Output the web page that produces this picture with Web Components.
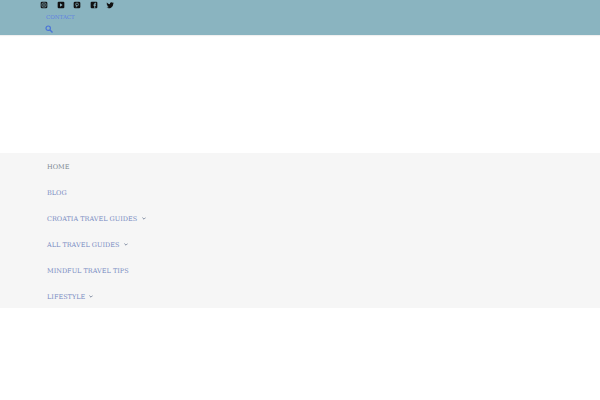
<!DOCTYPE html>
<html>
<head>
<meta charset="utf-8">
<title>Menu</title>
<style>
  html, body { margin: 0; background: #fff; }
  body { font-family: "DejaVu Serif", serif; }
</style>
</head>
<body>
<top-bar>
  <social-icon name="instagram"></social-icon>
  <social-icon name="youtube"></social-icon>
  <social-icon name="pinterest"></social-icon>
  <social-icon name="facebook"></social-icon>
  <social-icon name="twitter"></social-icon>
  <span slot="link">CONTACT</span>
</top-bar>
<mobile-menu>
  <menu-row style="--c:#7d8993">HOME</menu-row>
  <menu-row>BLOG</menu-row>
  <menu-row caret>CROATIA TRAVEL GUIDES</menu-row>
  <menu-row caret>ALL TRAVEL GUIDES</menu-row>
  <menu-row>MINDFUL TRAVEL TIPS</menu-row>
  <menu-row caret style="--gap:3px">LIFESTYLE</menu-row>
</mobile-menu>
<script>
const icons = {
  instagram: '<rect x="1" y="1" width="10" height="10" rx="2" fill="#111"/><rect x="3" y="3" width="6" height="6" rx="1.5" fill="none" stroke="#8ab4c0"/><circle cx="6" cy="6" r="1.2" fill="#8ab4c0"/>',
  youtube: '<rect x="1" y="1" width="10" height="10" rx="1.5" fill="#111"/><path d="M4.5 3.5v5l4-2.5z" fill="#8ab4c0"/>',
  pinterest: '<rect x="1" y="1" width="10" height="10" rx="2" fill="#111"/><circle cx="6" cy="5.2" r="2.2" fill="none" stroke="#8ab4c0"/><path d="M5.6 5.5 4.8 9.5" stroke="#8ab4c0"/>',
  facebook: '<rect x="1" y="1" width="10" height="10" rx="1.5" fill="#111"/><path d="M6.5 11V7H5.2V5.4h1.3V4.2c0-1.1.7-1.6 1.6-1.6h1v1.5h-.7c-.4 0-.6.2-.6.6v.7h1.2L8.8 7H7.800V11z" fill="#8ab4c0"/>',
  twitter: '<path d="M11.500 2.800c-.4.2-.8.3-1.300.4.500-.3.800-.7 1-1.200-.4.300-.9.500-1.400.6a2.300 2.300 0 0 0-3.900 2.100C4.100 4.600 2.500 3.700 1.400 2.300c-.6 1-.3 2.300.7 3-.4 0-.7-.1-1-.3 0 1.100.8 2.100 1.900 2.300-.3.100-.7.100-1 0 .3.900 1.200 1.600 2.200 1.600A4.700 4.700 0 0 1 .8 9.900a6.600 6.600 0 0 0 10.100-5.800c.2-.3.500-.7.600-1.300z" fill="#111"/>'
};

class SocialIcon extends HTMLElement {
  connectedCallback() {
    this.attachShadow({ mode: 'open' });
    this.shadowRoot.innerHTML = `
      <style>
        :host { display: block; width: 8px; height: 8px; }
        svg { display: block; width: 8px; height: 8px; }
      </style>
      <svg viewBox="0 0 12 12">${icons[this.getAttribute('name')]}</svg>
    `;
  }
}
customElements.define('social-icon', SocialIcon);

class TopBar extends HTMLElement {
  connectedCallback() {
    this.attachShadow({ mode: 'open' });
    this.shadowRoot.innerHTML = `
      <style>
        :host { display: block; height: 35px; background: #8ab4c0; padding-left: 40px; box-sizing: border-box; box-shadow: 0 1px 1px rgba(0,0,0,.06); position: relative; }
        .social { display: flex; gap: 8.500px; padding-top: 1px; height: 12px; }
        .link { font-size: 5.500px; line-height: 8px; color: #5f82e0; padding: 0 0 0 6px; }
        .search { display: block; margin: 4px 0 0 5px; }
      </style>
      <div class="social"><slot></slot></div>
      <div class="link"><slot name="link"></slot></div>
      <svg class="search" width="8" height="8" viewBox="0 0 8 8">
        <circle cx="3.200" cy="3.200" r="2.200" fill="none" stroke="#4a74d8" stroke-width="1.200"/>
        <path d="M5 5l2.500 2.500" stroke="#4a74d8" stroke-width="1.400"/>
      </svg>
    `;
  }
}
customElements.define('top-bar', TopBar);

class MobileMenu extends HTMLElement {
  connectedCallback() {
    this.attachShadow({ mode: 'open' });
    this.shadowRoot.innerHTML = `
      <style>
        :host { display: block; margin-top: 118px; height: 155px; background: #f6f6f6; }
        div { display: flex; flex-direction: column; }
      </style>
      <div><slot></slot></div>
    `;
  }
}
customElements.define('mobile-menu', MobileMenu);

class MenuRow extends HTMLElement {
  connectedCallback() {
    this.attachShadow({ mode: 'open' });
    const caret = this.hasAttribute('caret')
      ? '<svg width="4" height="3" viewBox="0 0 4 3"><path d="M.4 .6 2 2.200 3.600 .6" fill="none" stroke="#76839a" stroke-width=".9"/></svg>'
      : '';
    this.shadowRoot.innerHTML = `
      <style>
        :host { display: flex; align-items: center; gap: var(--gap, 4px); height: 26px; padding: 1px 0 0 47px; box-sizing: border-box; font-size: 6.500px; color: var(--c, #7a8cc2); }
        svg { display: block; margin: 0 0 0 .5px; }
      </style>
      <slot></slot>${caret}
    `;
  }
}
customElements.define('menu-row', MenuRow);
</script>
</body>
</html>
